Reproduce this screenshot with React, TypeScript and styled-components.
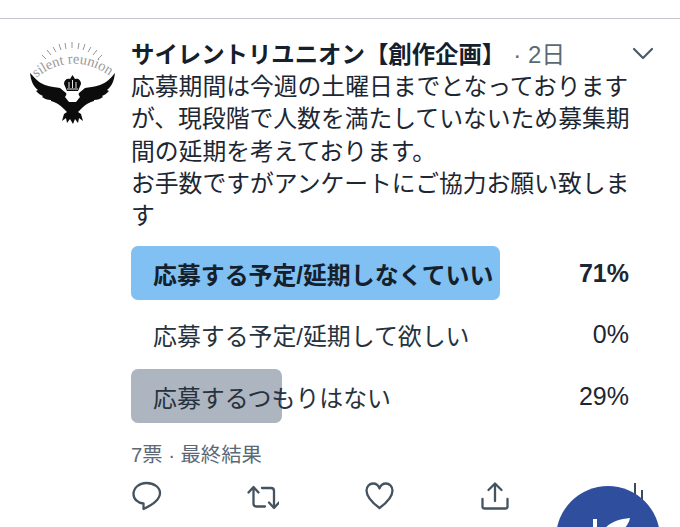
import React from 'react';
import styled, { createGlobalStyle } from 'styled-components';

const Global = createGlobalStyle`
  html, body {
    margin: 0;
    padding: 0;
    background: #fff;
  }
  body {
    width: 680px;
    height: 527px;
    overflow: hidden;
    font-family: 'Liberation Sans', 'Noto Sans CJK JP', sans-serif;
    color: #1c2733;
  }
`;

const Page = styled.div`
  position: relative;
  width: 680px;
  height: 527px;
  overflow: hidden;
  padding-top: 18px;
  box-sizing: border-box;
`;

const Tweet = styled.article`
  display: flex;
  border-top: 1px solid #c4c8cc;
  padding: 15px 0 0 26px;
  gap: 11px;
`;

const Avatar = styled.svg`
  width: 94px;
  height: 94px;
  flex: none;
  margin-top: 5px;
`;

const Body = styled.div`
  flex: 1;
  min-width: 0;
  padding-right: 26px;
`;

const Header = styled.div`
  display: flex;
  align-items: center;
  height: 37px;
`;

const Name = styled.span`
  font-size: 23.4px;
  font-weight: 700;
  color: #14202c;
  white-space: nowrap;
`;

const Time = styled.span`
  font-size: 24px;
  color: #5b6976;
  margin-left: 8px;
  white-space: nowrap;
`;

const Chevron = styled.svg`
  width: 22px;
  height: 14px;
  margin-left: auto;
  margin-top: 2px;
  color: #4b5a68;
`;

const Text = styled.p`
  margin: 0;
  width: 510px;
  font-size: 23.8px;
  line-height: 32.3px;
  color: #1c2733;
`;

const Poll = styled.div`
  display: flex;
  flex-direction: column;
  gap: 7.5px;
  margin-top: 14px;
`;

const Option = styled.div`
  position: relative;
  display: flex;
  align-items: center;
  justify-content: space-between;
  height: 54px;
  padding: 0 25px 0 22px;
`;

const Fill = styled.div<{ $color: string; $width: number }>`
  position: absolute;
  left: 0;
  top: 0;
  bottom: 0;
  width: ${p => p.$width}px;
  background: ${p => p.$color};
  border-radius: 7px;
`;

const Label = styled.span<{ $bold?: boolean }>`
  position: relative;
  font-size: 23.9px;
  font-weight: ${p => (p.$bold ? 700 : 400)};
  color: ${p => (p.$bold ? '#14202c' : '#26323e')};
  white-space: nowrap;
`;

const Percent = styled.span<{ $bold?: boolean }>`
  position: relative;
  font-size: 25px;
  font-weight: ${p => (p.$bold ? 700 : 400)};
  color: #1c2733;
`;

const Meta = styled.div`
  margin-top: 18px;
  font-size: 20.3px;
  line-height: 28px;
  color: #5b6976;
`;

const Actions = styled.div`
  display: flex;
  margin-top: 11px;
  gap: 84px;
`;

const ActionIcon = styled.svg`
  width: 32px;
  height: 32px;
  flex: none;
  fill: none;
  stroke: #45525f;
  stroke-width: 2.3;
  stroke-linecap: round;
  stroke-linejoin: round;
`;

const Fab = styled.div`
  position: absolute;
  left: 556px;
  top: 486px;
  width: 104px;
  height: 104px;
  border-radius: 50%;
  background: #2f4f9e;
`;

const FabGlyph = styled.svg`
  position: absolute;
  left: 36px;
  top: 31px;
  width: 42px;
  height: 14px;
`;

const ScrollTick = styled.div<{ $left: number; $top: number }>`
  position: absolute;
  left: ${p => p.$left}px;
  top: ${p => p.$top}px;
  width: 2px;
  height: 20px;
  background: #3d4a57;
`;

const options = [
  { label: '応募する予定/延期しなくていい', pct: '71%', color: '#80c0f2', width: 369, bold: true },
  { label: '応募する予定/延期して欲しい', pct: '0%', color: 'transparent', width: 0, bold: false },
  { label: '応募するつもりはない', pct: '29%', color: '#adb5c0', width: 151, bold: false },
];

const Logo = () => (
  <Avatar viewBox="0 0 94 94">
    <defs>
      <path id="arc" d="M10 39 Q46 11 84 37" />
    </defs>
    <path
      stroke="#8a8a8a"
      strokeWidth="0.9"
      fill="none"
      d="M46 3V9M39 4L40 10M33 5L35 11M27 8L30 13M21 11L25 16M53 4L52 10M59 5L57 11M65 8L62 13M71 11L67 16M16 16L20 20M76 16L72 20"
    />
    <text fontFamily="'Liberation Serif', serif" fontSize="14.5" fill="#9a9a9a">
      <textPath href="#arc" startOffset="50%" textAnchor="middle">silent reunion</textPath>
    </text>
    <path
      fill="#0c0c0c"
      d="M4 34 C9 39 13 44 19 46 C25 48 30 48 34 49 L40 54 L42 59 L51 59 L53 54 L59 49 C63 48 68 48 74 46 C80 44 85 39 89 34 C88 42 86 47 81 51 L83 52 C81 54 79 56 76 57 L77 58 C74 60 72 61 68 61 L68 62 C64 63 60 65 55 70 L52 73 L55 75 L57 82 L53 79 L52 84 L49 80 L47 85 L44 80 L41 84 L40 79 L36 82 L38 75 L41 73 L38 70 C33 65 29 63 25 62 L25 61 C21 61 19 60 16 58 L17 57 C14 56 12 54 10 52 L12 51 C7 47 5 42 4 34 Z"
    />
    <path fill="#fff" d="M42 53 H51 L54 58 L50 63 H43 L39 58 Z" />
    <path
      fill="#0c0c0c"
      d="M41 52 L38 45 C38 41 41 39 44 40 L46.500 36 L49 40 C52 39 55 41 55 45 L52 52 Z"
    />
    <path stroke="#fff" strokeWidth="0.9" fill="none" d="M43 43V49M46.500 41V49M50 43V49M41 50H52" />
  </Avatar>
);

export default function App() {
  return (
    <Page>
      <Global />
      <Tweet>
        <Logo />
        <Body>
          <Header>
            <Name>サイレントリユニオン【創作企画】</Name>
            <Time>· 2日</Time>
            <Chevron viewBox="0 0 22 14" fill="none" stroke="currentColor" strokeWidth="2.2" strokeLinecap="round" strokeLinejoin="round">
              <path d="M2 2L11 11L20 2" />
            </Chevron>
          </Header>
          <Text>
            応募期間は今週の土曜日までとなっております
            が、現段階で人数を満たしていないため募集期
            間の延期を考えております。
            <br />
            お手数ですがアンケートにご協力お願い致しま
            す
          </Text>
          <Poll>
            {options.map(o => (
              <Option key={o.label}>
                <Fill $color={o.color} $width={o.width} />
                <Label $bold={o.bold}>{o.label}</Label>
                <Percent $bold={o.bold}>{o.pct}</Percent>
              </Option>
            ))}
          </Poll>
          <Meta>7票 · 最終結果</Meta>
          <Actions>
            <ActionIcon viewBox="0 0 32 32">
              <path d="M15.500 3C8 3 2.500 8 2.500 14C2.500 19 6.500 23 12.500 23.500V29C19 26 29 20 29 13C29 7.500 23 3 15.500 3Z" />
            </ActionIcon>
            <ActionIcon viewBox="0 0 32 32">
              <path d="M1.500 12.500L6.500 7L11.500 12.500M6.500 8V23.500C6.500 25.500 7.500 26.500 9.500 26.500H18" />
              <path d="M32 22.500L27 28L22 22.500M27 27V11C27 9 26 8 24 8H15" />
            </ActionIcon>
            <ActionIcon viewBox="0 0 32 32">
              <path d="M16.500 28C11 24 3.500 18 3.500 10.500C3.500 6.500 6.500 3.500 10 3.500C13 3.500 15.500 5.500 16.500 8.500C17.500 5.500 20 3.500 23 3.500C26.500 3.500 29.500 6.500 29.500 10.500C29.500 18 22 24 16.500 28Z" />
            </ActionIcon>
            <ActionIcon viewBox="0 0 32 32">
              <path d="M16 21V4M9.500 10L16 3.500L22.500 10" />
              <path d="M3.500 19V26.500C3.500 27.800 4.200 28.500 5.500 28.500H26.500C27.800 28.500 28.500 27.800 28.500 26.500V19" />
            </ActionIcon>
          </Actions>
        </Body>
      </Tweet>
      <ScrollTick $left={634} $top={483} />
      <ScrollTick $left={641} $top={490} />
      <Fab>
        <FabGlyph viewBox="0 0 42 14">
          <path fill="#fff" d="M1 2V14H5V2Z" />
          <path fill="#fff" d="M38 1C26 2 16 6 11 14H30C34 10 37 6 38 1Z" />
        </FabGlyph>
      </Fab>
    </Page>
  );
}
